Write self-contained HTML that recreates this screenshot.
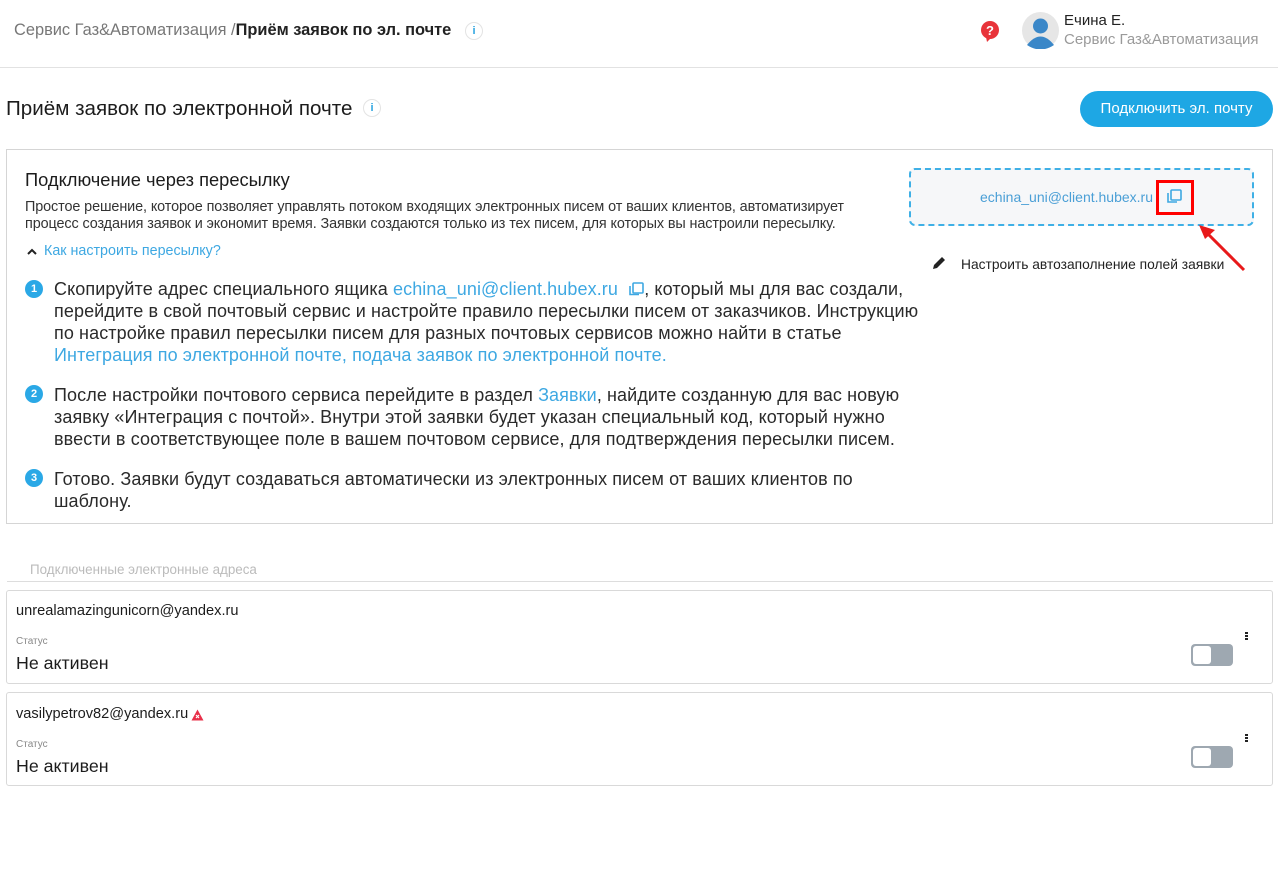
<!DOCTYPE html>
<html><head><meta charset="utf-8"><style>
*{margin:0;padding:0;box-sizing:border-box}
body{width:1278px;height:896px;background:#fff;font-family:"Liberation Sans",Arial,sans-serif;color:#222;position:relative;overflow:hidden}
.a{position:absolute;white-space:nowrap}
.info{position:absolute;width:18px;height:18px;border:1px solid #e3e3e3;border-radius:50%;color:#2aa4e0;font-size:11px;font-weight:bold;text-align:center;line-height:16px}
.blue{color:#3ea8e2}
.num{position:absolute;width:18px;height:18px;border-radius:50%;background:#2aa8e6;color:#fff;font-size:11px;font-weight:bold;text-align:center;line-height:18px}
.step{font-size:18px;color:#2a2a2a;line-height:22px;letter-spacing:0.1px}
.card{position:absolute;left:6px;width:1267px;border:1px solid #d9d9d9;border-radius:3px}
.tog{position:absolute;width:42px;height:22px;border-radius:4px;background:#9ea8b1}
.tog::after{content:"";position:absolute;left:2px;top:2px;width:18px;height:18px;border-radius:3px;background:#fff}
.dots{position:absolute;width:3px}
.dots i{display:block;width:3px;height:2px;background:#222;margin-bottom:1px}
</style></head><body>
<div class="a" style="left:14px;top:21px;font-size:16.4px;color:#777">Сервис Газ&amp;Автоматизация /<b style="color:#222">Приём заявок по эл. почте</b></div>
<div class="info" style="left:465px;top:22px">i</div>
<svg class="a" style="left:980px;top:20px" width="20" height="22" viewBox="0 0 20 22"><circle cx="10" cy="10" r="9" fill="#e8343a"/><path d="M6 17 L7 22 L11 18Z" fill="#e8343a"/><text x="10" y="15" text-anchor="middle" font-family="Liberation Sans" font-weight="bold" font-size="13" fill="#fff">?</text></svg>
<svg class="a" style="left:1022px;top:12px" width="37" height="37" viewBox="0 0 37 37"><circle cx="18.5" cy="18.5" r="18.5" fill="#e6e6e6"/><circle cx="18.5" cy="14" r="7.5" fill="#3a87c8"/><path d="M5 33 Q18.5 16 32 33 Q18.5 42 5 33Z" fill="#3a87c8"/></svg>
<div class="a" style="left:1064px;top:12px;font-size:15px;color:#222">Ечина Е.</div>
<div class="a" style="left:1064px;top:31px;font-size:15px;color:#9a9a9a">Сервис Газ&amp;Автоматизация</div>
<div class="a" style="left:0;top:67px;width:1278px;height:1px;background:#e2e2e2"></div>

<div class="a" style="left:6px;top:97px;font-size:20.6px;color:#1c1c1c">Приём заявок по электронной почте</div>
<div class="info" style="left:363px;top:99px">i</div>
<div class="a" style="left:1080px;top:91px;width:193px;height:36px;border-radius:18px;background:#1ea7e4;color:#fff;font-size:15px;text-align:center;line-height:36px">Подключить эл. почту</div>

<div class="a" style="left:6px;top:149px;width:1267px;height:375px;border:1px solid #d5d5d5"></div>
<div class="a" style="left:25px;top:169px;font-size:18.3px;color:#1c1c1c">Подключение через пересылку</div>
<div class="a" style="left:25px;top:199px;font-size:14.4px;color:#333;line-height:17px;letter-spacing:-0.1px">Простое решение, которое позволяет управлять потоком входящих электронных писем от ваших клиентов, автоматизирует<br>процесс создания заявок и экономит время. Заявки создаются только из тех писем, для которых вы настроили пересылку.</div>
<svg class="a" style="left:26px;top:247px" width="12" height="9" viewBox="0 0 12 9"><path d="M2 7 L6 3 L10 7" stroke="#222" stroke-width="2" fill="none"/></svg>
<div class="a blue" style="left:44px;top:243px;font-size:14.3px">Как настроить пересылку?</div>

<div class="num" style="left:25px;top:280px">1</div>
<div class="a step" style="left:54px;top:278px">Скопируйте адрес специального ящика <span class="blue">echina_uni@client.hubex.ru</span> &nbsp;<svg width="16" height="14" viewBox="0 0 16 14" style="vertical-align:-1px"><rect x="5" y="1" width="10" height="10" rx="1" stroke="#3ea8e2" stroke-width="1.6" fill="none"/><path d="M2 4 V12.5 H11" stroke="#3ea8e2" stroke-width="1.6" fill="none"/></svg>, который мы для вас создали,<br>перейдите в свой почтовый сервис и настройте правило пересылки писем от заказчиков. Инструкцию<br>по настройке правил пересылки писем для разных почтовых сервисов можно найти в статье<br><span class="blue">Интеграция по электронной почте, подача заявок по электронной почте.</span></div>
<div class="num" style="left:25px;top:385px">2</div>
<div class="a step" style="left:54px;top:384px">После настройки почтового сервиса перейдите в раздел <span class="blue">Заявки</span>, найдите созданную для вас новую<br>заявку «Интеграция с почтой». Внутри этой заявки будет указан специальный код, который нужно<br>ввести в соответствующее поле в вашем почтовом сервисе, для подтверждения пересылки писем.</div>
<div class="num" style="left:25px;top:469px">3</div>
<div class="a step" style="left:54px;top:468px">Готово. Заявки будут создаваться автоматически из электронных писем от ваших клиентов по<br>шаблону.</div>

<div class="a" style="left:909px;top:168px;width:345px;height:58px;border:2px dashed #3fb0e6;border-radius:6px;background:#f6f7f9"></div>
<div class="a" style="left:980px;top:189px;font-size:14px;color:#4a9fd6">echina_uni@client.hubex.ru</div>
<div class="a" style="left:1156px;top:180px;width:38px;height:35px;border:3px solid #f00"></div>
<svg class="a" style="left:1166px;top:189px" width="16" height="15" viewBox="0 0 16 15"><rect x="5" y="1" width="10" height="10" rx="1" stroke="#3ea8e2" stroke-width="1.6" fill="none"/><path d="M2 4 V13 H11" stroke="#3ea8e2" stroke-width="1.6" fill="none"/></svg>
<svg class="a" style="left:1195px;top:220px" width="55" height="55" viewBox="0 0 55 55"><path d="M49 50 L12 13" stroke="#e8191a" stroke-width="3"/><path d="M4 5 L20 10 L10 19Z" fill="#e8191a"/></svg>
<svg class="a" style="left:932px;top:256px" width="14" height="14" viewBox="0 0 14 14"><path d="M1 13 L2 9 L10 1 L13 4 L5 12Z" fill="#222"/></svg>
<div class="a" style="left:961px;top:257px;font-size:13.8px;color:#222">Настроить автозаполнение полей заявки</div>

<div class="a" style="left:30px;top:562px;font-size:13.4px;color:#bbb">Подключенные электронные адреса</div>
<div class="a" style="left:7px;top:581px;width:1266px;height:1px;background:#ddd"></div>

<div class="card" style="top:590px;height:94px"></div>
<div class="a" style="left:16px;top:603px;font-size:14.6px;color:#1c1c1c">unrealamazingunicorn@yandex.ru</div>
<div class="a" style="left:16px;top:636px;font-size:10px;color:#888">Статус</div>
<div class="a" style="left:16px;top:653px;font-size:17.8px;color:#1c1c1c">Не активен</div>
<div class="dots a" style="left:1245px;top:632px"><i></i><i></i><i></i></div>
<div class="tog" style="left:1191px;top:644px"></div>

<div class="card" style="top:692px;height:94px"></div>
<div class="a" style="left:16px;top:706px;font-size:14.6px;color:#1c1c1c">vasilypetrov82@yandex.ru</div>
<svg class="a" style="left:191px;top:709px" width="13" height="12" viewBox="0 0 13 12"><path d="M6.5 0.5 L12.5 11.5 H0.5Z" fill="#e8304a"/><path d="M5 6 L8 9 M8 6 L5 9" stroke="#fff" stroke-width="1.2"/></svg>
<div class="a" style="left:16px;top:739px;font-size:10px;color:#888">Статус</div>
<div class="a" style="left:16px;top:756px;font-size:17.8px;color:#1c1c1c">Не активен</div>
<div class="dots a" style="left:1245px;top:734px"><i></i><i></i><i></i></div>
<div class="tog" style="left:1191px;top:746px"></div>
</body></html>
